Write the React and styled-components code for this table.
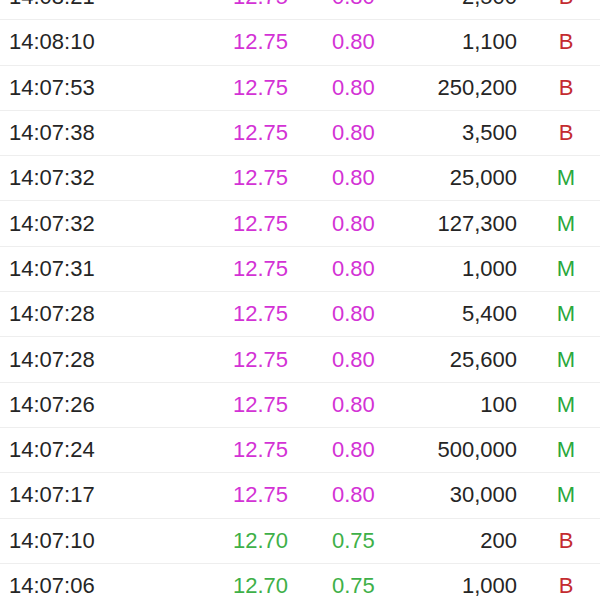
import React from "react";
import styled, { createGlobalStyle } from "styled-components";

const GlobalStyle = createGlobalStyle`
  html, body {
    margin: 0;
    padding: 0;
    background: #ffffff;
    overflow: hidden;
  }
  body {
    font-family: "Liberation Sans", Arial, sans-serif;
  }
`;

const TRADES = [
  ["14:08:21", "12.75", "0.80", "2,500", "B"],
  ["14:08:10", "12.75", "0.80", "1,100", "B"],
  ["14:07:53", "12.75", "0.80", "250,200", "B"],
  ["14:07:38", "12.75", "0.80", "3,500", "B"],
  ["14:07:32", "12.75", "0.80", "25,000", "M"],
  ["14:07:32", "12.75", "0.80", "127,300", "M"],
  ["14:07:31", "12.75", "0.80", "1,000", "M"],
  ["14:07:28", "12.75", "0.80", "5,400", "M"],
  ["14:07:28", "12.75", "0.80", "25,600", "M"],
  ["14:07:26", "12.75", "0.80", "100", "M"],
  ["14:07:24", "12.75", "0.80", "500,000", "M"],
  ["14:07:17", "12.75", "0.80", "30,000", "M"],
  ["14:07:10", "12.70", "0.75", "200", "B"],
  ["14:07:06", "12.70", "0.75", "1,000", "B"],
];

// 가격 색상 (상승 / 보합)
const priceColor = (price) => (price === "12.75" ? "#d332d5" : "#3eb048");

// 거래 리스트
const List = styled.div`
  margin-top: -25px;
  width: 600px;
`;

const Row = styled.div`
  box-sizing: border-box;
  height: 45.3px;
  display: grid;
  grid-template-columns: 224px 99px 80px 105px 92px;
  align-items: center;
  padding-left: 9px;
  border-bottom: 1px solid #eeeeee;
  font-size: 22px;
`;

const Time = styled.span`
  color: #252525;
`;

const Price = styled.span`
  color: ${(p) => p.$color};
`;

const Volume = styled.span`
  color: #252525;
  text-align: right;
`;

const Side = styled.span`
  padding-left: 15px;
  width: 68px;
  text-align: center;
  color: ${(p) => (p.$side === "B" ? "#c42b30" : "#2aa83c")};
`;

function App() {
  return (
    <>
      <GlobalStyle />
      <List>
        {TRADES.map(([time, price, change, volume, side], i) => (
          <Row key={i}>
            <Time>{time}</Time>
            <Price $color={priceColor(price)}>{price}</Price>
            <Price $color={priceColor(price)}>{change}</Price>
            <Volume>{volume}</Volume>
            <Side $side={side}>{side}</Side>
          </Row>
        ))}
      </List>
    </>
  );
}

export default App;
